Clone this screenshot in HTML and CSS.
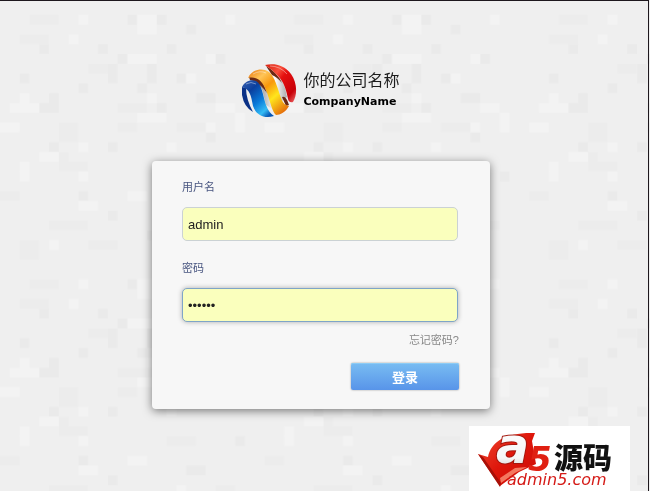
FILE: index.html
```html
<!DOCTYPE html>
<html lang="zh-CN">
<head>
<meta charset="utf-8">
<title>登录</title>
<link rel="stylesheet" href="styles.css">
</head>
<body>
<svg class="texture" aria-hidden="true">
  <defs>
    <pattern id="tiles" width="27" height="27" patternUnits="userSpaceOnUse" patternTransform="translate(0 5) scale(9.8)">
      <path fill="#e8e8e8" d="M4 4h1v1h-1zM5 9h1v2h-2v-1h1zM8 8h1v1h-1zM2 7h1v1h-1zM10 4h1v1h-1zM11 6h1v2h-1zM12 5h1v1h-1zM13 1h1v1h-1zM16 1h1v1h-1zM17 4h1v1h-1zM15 6h1v2h-1zM19 2h1v1h-1zM22 5h1v1h-1zM14 8h1v1h-1zM20 9h2v1h-2zM18 7h1v1h-1zM16 10h1v1h-1zM21 13h1v1h-1zM11 14h1v1h-1zM5 14h1v1h-1zM8 19h1v1h-1zM11 21h1v1h-1zM24 17h1v1h-1zM19 20h2v1h-2zM15 23h1v1h-1z"/>
      <path fill="#ebebeb" d="M3 1h3v1h-3zM2 3h3v1h-3zM12 12h2v1h-2zM6 15h1v1h2v1h-3zM0 19h2v1h-2zM9 6h2v1h-2zM12 10h3v1h-3zM18 12h3v1h-3zM5 22h4v1h-4zM2 24h2v2h-2zM17 17h3v1h-3zM22 22h2v1h-2zM9 24h3v1h-3zM6 12h2v2h-2z"/>
      <path fill="#f5f5f5" d="M8 1h1v1h-1zM7 3h1v1h-1zM14 1h2v2h-2zM23 1h1v1h-1zM15 9h1v1h-1zM2 9h1v1h-1zM1 10h3v1h-3zM17 14h1v1h-1zM14 11h3v1h-3zM19 7h1v1h-1zM21 12h1v1h-1zM4 15h2v1h-2zM2 16h1v2h-1zM8 17h1v1h-1zM8 20h2v1h-2zM22 10h2v1h-2zM8 14h1v1h-1zM21 5h1v1h-1zM13 5h3v1h-3zM0 12h2v1h-2zM24 11h1v2h-1zM5 24h1v1h-1zM18 22h1v1h-1zM13 19h2v1h-2z"/>
    </pattern>
  </defs>
  <rect width="100%" height="100%" fill="#efefef"/>
  <rect width="100%" height="100%" fill="url(#tiles)" opacity=".65"/>
</svg>

<main class="page">
  <header class="brand">
    <svg class="brand-mark" viewBox="0 0 56 56" aria-hidden="true">
      <defs>
        <linearGradient id="silver" x1="0" y1="0" x2="1" y2="0"><stop offset="0" stop-color="#555"/><stop offset=".3" stop-color="#aaa"/><stop offset=".65" stop-color="#fff"/><stop offset="1" stop-color="#aaa"/></linearGradient>
        <linearGradient id="red" x1="0" y1="0" x2="1" y2="1"><stop offset="0" stop-color="#d81c0c"/><stop offset=".3" stop-color="#f8503c"/><stop offset=".45" stop-color="#e5100f"/><stop offset=".8" stop-color="#c80008"/><stop offset="1" stop-color="#f07070"/></linearGradient>
        <linearGradient id="gold" x1="0" y1="0" x2=".8" y2="1"><stop offset="0" stop-color="#e87510"/><stop offset=".25" stop-color="#ffc558"/><stop offset=".45" stop-color="#f8980c"/><stop offset=".68" stop-color="#ffe51c"/><stop offset="1" stop-color="#e56d0b"/></linearGradient>
        <linearGradient id="blue" x1="0" y1="0" x2=".8" y2="1"><stop offset="0" stop-color="#3b62b0"/><stop offset=".3" stop-color="#0a3f9e"/><stop offset=".6" stop-color="#0878d8"/><stop offset=".85" stop-color="#35bcf5"/><stop offset="1" stop-color="#0756b5"/></linearGradient>
      </defs>
      <path fill="url(#silver)" d="M10 14L22 10L34 11Q42 16 45 34L40 38L32 47L24 42L20 26Z"/>
      <path fill="#6b2a14" d="M7 14Q14 11 21 20L25 30Q17 19 8 17ZM24 3Q35 9 40 20Q35 14 30 12ZM40 34Q44 32 47 42L44 43Z"/>
      <path fill="url(#red)" d="M23 2C31 0 42 1 49 11C56 21 55 33 51 39Q47 40 46 36C44 25 41 18 36 13Q31 7 23 2Z"/>
      <path fill="url(#gold)" d="M6 15C9 8 17 5 23 7C30 9 33 17 36 26C39 35 40 42 47 43C44 49 38 52 34 52C30 49 28 37 24 27C20 17 14 13 6 15Z"/>
      <path fill="#0a3186" d="M0 24L4 25Q4 36 11 49Q2 44 0 32Z"/>
      <path fill="url(#blue)" d="M0 24C3 18 9 16 14 18C20 21 21 33 24 42Q27 50 32 53C22 56 14 52 11 43C9 33 8 26 0 24Z"/>
      <path fill="none" stroke="#fff" stroke-opacity=".4" d="M28 3Q38 3 45 11M11 11Q18 7 24 10M4 21Q9 18 14 21"/>
    </svg>
    <div class="brand-text">
      <div class="brand-name">你的公司名称</div>
      <div class="brand-latin">CompanyName</div>
    </div>
  </header>

  <form class="login">
    <div class="field">
      <label for="username">用户名</label>
      <input id="username" type="text" value="admin">
    </div>
    <div class="field">
      <label for="password">密码</label>
      <input id="password" class="is-active" type="password" value="123456">
    </div>
    <a class="forgot" href="#">忘记密码?</a>
    <button class="submit" type="submit">登录</button>
  </form>
</main>

<svg class="source-badge" viewBox="0 0 161 65" role="img" aria-label="a5源码 admin5.com">
  <defs>
    <linearGradient id="arrow" x1="0" y1="0" x2="1" y2="1"><stop offset="0" stop-color="#f04b32"/><stop offset=".5" stop-color="#de160b"/><stop offset="1" stop-color="#c90c05"/></linearGradient>
    <linearGradient id="letter" x1="0" y1="0" x2="0" y2="1"><stop offset="0" stop-color="#fff"/><stop offset=".7" stop-color="#f6f6f6"/><stop offset="1" stop-color="#c4c4c4"/></linearGradient>
  </defs>
  <rect width="161" height="65" fill="#fff"/>
  <path fill="url(#arrow)" d="M9 28L19 31C22 15 38 6 66 7L63 15L67 38L50 46L31 60Z"/>
  <path fill="#a81008" d="M9 28L14 31L32 57L31 61Z"/>
  <path fill="#f4775f" d="M31 52L46 42L58 41L46 47L32 57Z"/>
  <text class="badge-five" x="59" y="45">5</text>
  <text class="badge-a" x="27" y="37">a</text>
  <text class="badge-cjk" x="85" y="43">源码</text>
  <text class="badge-url" x="38" y="59">admin5.com</text>
</svg>
</body>
</html>
```
FILE: styles.css
```css
* {
  box-sizing: border-box;
}

body {
  margin: 0;
  background: #efefef;
  font-family: "Liberation Sans", "Noto Sans CJK SC", sans-serif;
  font-size: 12px;
}

.texture {
  position: fixed;
  inset: 0;
  z-index: -1;
  width: 100%;
  height: 100%;
}

.page {
  display: flex;
  flex-direction: column;
  align-items: center;
  min-height: 100vh;
  margin-right: 1px;
  padding: 62px 6px 32px 0;
  border-top: 1px solid #1d171d;
  border-right: 1px solid #1d171d;
}

.brand {
  display: flex;
  align-items: center;
  gap: 5px;
  margin-bottom: 42px;
}

.brand-mark {
  width: 56px;
  height: 56px;
}

.brand-text {
  color: #1c1c1c;
}

.brand-name {
  font-size: 16px;
  line-height: 22px;
}

.brand-latin {
  color: #000;
  font: bold 11px/20px "DejaVu Sans", sans-serif;
}

.login {
  display: flex;
  flex-direction: column;
  width: 338px;
  max-width: 100%;
  padding: 18px 31px 19px 30px;
  border-radius: 4px;
  background: #f7f7f7;
  box-shadow: 0 2px 10px rgba(0, 0, 0, 0.5);
}

.field {
  display: flex;
  flex-direction: column;
  gap: 12px;
  margin: 0 1px 19px 0;
}

.field label {
  color: #495680;
  font-size: 11px;
  line-height: 16px;
}

.field input {
  width: 100%;
  height: 34px;
  padding: 0 5px;
  border: 1px solid #cbd2d4;
  border-radius: 5px;
  outline: 0;
  background: #faffbd;
  color: #222;
  font: 13px "Liberation Sans", sans-serif;
}

.field .is-active {
  border-color: #7fa5c8;
  box-shadow: 0 0 5px rgba(0, 0, 0, 0.3);
}

.forgot {
  align-self: flex-end;
  margin: -9px 0 15px;
  color: #888;
  font-size: 11px;
  line-height: 16px;
  text-decoration: none;
}

.submit {
  align-self: flex-end;
  width: 108px;
  height: 27px;
  padding: 0;
  border: 0;
  border-radius: 2px;
  background: linear-gradient(#79bdf2, #5894e9);
  box-shadow: 0 0 2px rgba(0, 0, 0, 0.4), inset 0 1px #8dccf5;
  color: #fff;
  font: bold 13px "Noto Sans CJK SC", sans-serif;
}

.source-badge {
  position: fixed;
  right: 20px;
  bottom: 0;
  width: 161px;
  height: 65px;
  overflow: visible;
}

.badge-a {
  fill: url(#letter);
  stroke: #a3170e;
  stroke-width: 2px;
  paint-order: stroke;
  font: italic bold 49px "DejaVu Sans", sans-serif;
}

.badge-five {
  fill: #e02012;
  font: italic bold 34px "DejaVu Sans", sans-serif;
}

.badge-cjk {
  fill: #111;
  font: 900 29px "Noto Sans CJK SC", sans-serif;
}

.badge-url {
  fill: #d51b17;
  font: italic 16px "DejaVu Sans", sans-serif;
}
```
